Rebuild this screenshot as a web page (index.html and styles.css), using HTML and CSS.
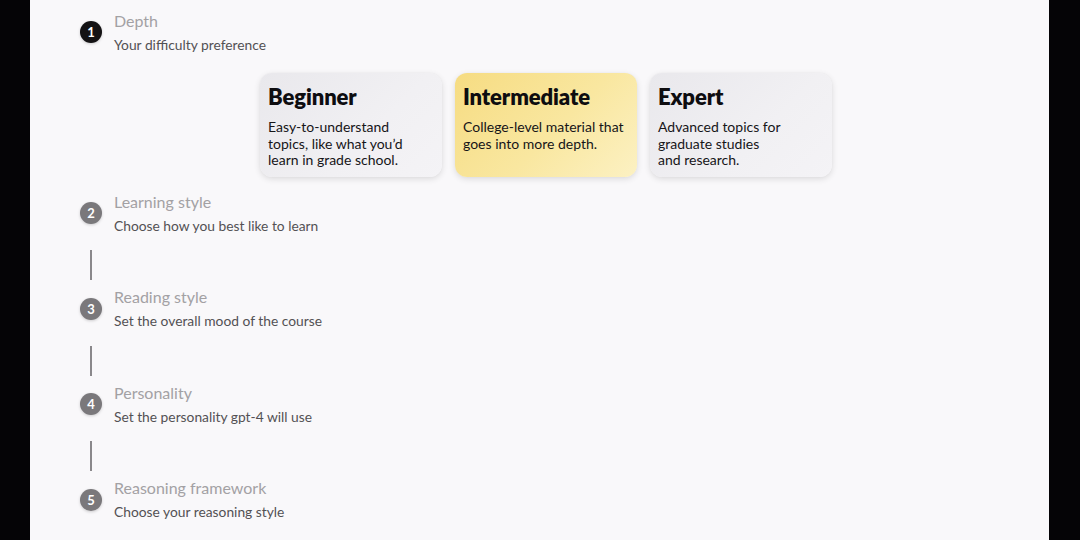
FILE: index.html
```html
<!DOCTYPE html>
<html>
<head>
<meta charset="utf-8">
<link rel="stylesheet" href="styles.css">
</head>
<body>
<div class="frame">
  <main class="panel">
    <section class="step">
      <div class="num num-active">1</div>
      <div class="step-text">
        <div class="step-title">Depth</div>
        <div class="step-sub">Your difficulty preference</div>
      </div>
    </section>
    <div class="cards">
      <div class="card">
        <h2 class="card-title">Beginner</h2>
        <p class="card-desc">Easy-to-understand<br>topics, like what you’d<br>learn in grade school.</p>
      </div>
      <div class="card card-selected">
        <h2 class="card-title">Intermediate</h2>
        <p class="card-desc">College-level material that<br>goes into more depth.</p>
      </div>
      <div class="card">
        <h2 class="card-title">Expert</h2>
        <p class="card-desc">Advanced topics for<br>graduate studies<br>and research.</p>
      </div>
    </div>
    <section class="step step-after-cards">
      <div class="num">2</div>
      <div class="step-text">
        <div class="step-title">Learning style</div>
        <div class="step-sub">Choose how you best like to learn</div>
      </div>
    </section>
    <div class="connector"></div>
    <section class="step">
      <div class="num">3</div>
      <div class="step-text">
        <div class="step-title">Reading style</div>
        <div class="step-sub">Set the overall mood of the course</div>
      </div>
    </section>
    <div class="connector"></div>
    <section class="step">
      <div class="num">4</div>
      <div class="step-text">
        <div class="step-title">Personality</div>
        <div class="step-sub">Set the personality gpt-4 will use</div>
      </div>
    </section>
    <div class="connector"></div>
    <section class="step">
      <div class="num">5</div>
      <div class="step-text">
        <div class="step-title">Reasoning framework</div>
        <div class="step-sub">Choose your reasoning style</div>
      </div>
    </section>
  </main>
</div>
</body>
</html>
```
FILE: styles.css
```css
html, body {
  margin: 0;
  padding: 0;
  background: #050406;
}
.frame {
  width: 1080px;
  height: 540px;
  display: flex;
  padding-left: 30px;
  box-sizing: border-box;
  overflow: hidden;
}
.panel {
  width: 1019px;
  height: 540px;
  background: #f9f8fa;
  padding: 11px 0 0 50px;
  box-sizing: border-box;
  font-family: Lato, "Noto Sans", sans-serif;
  display: flex;
  flex-direction: column;
}
.step {
  display: flex;
  align-items: center;
  gap: 12px;
  height: 42px;
  flex: none;
}
.num {
  width: 22px;
  height: 22px;
  border-radius: 50%;
  background: #7a787b;
  color: #fff;
  font-size: 13px;
  font-weight: 700;
  display: flex;
  align-items: center;
  justify-content: center;
  box-shadow: 0 1px 3px rgba(0,0,0,0.18);
  flex: none;
}
.num-active {
  background: #141214;
}
.step-text {
  display: flex;
  flex-direction: column;
  gap: 5px;
}
.step-title {
  font-size: 16px;
  line-height: 20px;
  color: #a3a1a4;
}
.step-sub {
  font-size: 13.8px;
  line-height: 18px;
  color: #535154;
}
.cards {
  display: flex;
  gap: 13px;
  margin: 20px 0 0 180px;
}
.card {
  width: 182px;
  height: 104px;
  box-sizing: border-box;
  border-radius: 12px;
  padding: 10px 8px 0 8px;
  background: linear-gradient(135deg, #e9e8ec 0%, #f1f0f3 60%, #f4f3f6 100%);
  box-shadow: 0 2px 6px rgba(0,0,0,0.12), 0 0 1px rgba(0,0,0,0.08);
}
.card-selected {
  background: linear-gradient(135deg, #f6dc82 0%, #f9e7a0 55%, #fcf1c3 100%);
}
.card-title {
  margin: 0;
  font-size: 22px;
  line-height: 28px;
  font-weight: 800;
  color: #0e0d10;
  letter-spacing: -0.1px;
}
.card-desc {
  margin: 8px 0 0;
  font-size: 14px;
  line-height: 16.5px;
  color: #161518;
}
.step-after-cards {
  margin-top: 15px;
}
.connector {
  width: 2px;
  height: 30px;
  background: #8a888b;
  margin: 16px 0 7.6px 10px;
  flex: none;
}
```
